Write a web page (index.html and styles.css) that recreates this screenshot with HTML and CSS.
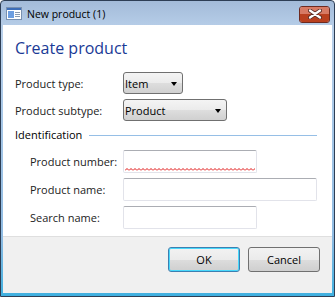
FILE: index.html
```html
<!DOCTYPE html>
<html>
<head>
    <title>New product (1)</title>
    <meta name="viewport" content="width=device-width, initial-scale=1.0">
    <link rel="stylesheet" href="styles.css">
</head>
<body>
    <div class="window">
        <!-- Title bar -->
        <div class="titlebar">
            <svg class="app-icon" width="16" height="13" viewBox="0 0 16 13">
                <rect x="0.5" y="0.5" width="15" height="12" fill="#ffffff" stroke="#7890b0"/>
                <rect x="1" y="1" width="14" height="2" fill="#3d6eb8"/>
                <rect x="2" y="4" width="6" height="7" fill="#6d9ee0"/>
                <rect x="9" y="5" width="5" height="1" fill="#8a9ab0"/>
                <rect x="9" y="7" width="5" height="1" fill="#8a9ab0"/>
                <rect x="9" y="9" width="5" height="1" fill="#8a9ab0"/>
            </svg>
            <span class="title">New product (1)</span>
            <div class="close-btn">
                <div class="close-top"></div>
                <div class="close-bottom"></div>
                <svg class="close-x" width="14" height="10" viewBox="0 0 14 10">
                    <path d="M2 1.5 L12 8.5 M12 1.5 L2 8.5" stroke="#5c2e26" stroke-width="4" stroke-linecap="round"/>
                    <path d="M2 1.5 L12 8.5 M12 1.5 L2 8.5" stroke="#ffffff" stroke-width="2.2" stroke-linecap="round"/>
                </svg>
            </div>
        </div>

        <!-- Client area -->
        <div class="client">
            <div class="content">
                <div class="heading">Create product</div>

                <div class="field-row">
                    <div class="label">Product type:</div>
                    <div class="combo combo-short"><span>Item</span><i class="arrow"></i></div>
                </div>
                <div class="field-row">
                    <div class="label">Product subtype:</div>
                    <div class="combo combo-long"><span>Product</span><i class="arrow"></i></div>
                </div>

                <div class="group-title">
                    <span>Identification</span>
                    <div class="group-line"></div>
                </div>

                <div class="group">
                    <div class="field-row">
                        <div class="label">Product number:</div>
                        <div class="textbox textbox-mid">
                            <svg class="squiggle" width="100%" height="3">
                                <defs>
                                    <pattern id="zigzag" width="4" height="3" patternUnits="userSpaceOnUse">
                                        <path d="M0 2.5 L2 0.5 L4 2.5" stroke="#e01010" stroke-width="1" fill="none"/>
                                    </pattern>
                                </defs>
                                <rect width="100%" height="3" fill="url(#zigzag)"/>
                            </svg>
                        </div>
                    </div>
                    <div class="field-row">
                        <div class="label">Product name:</div>
                        <div class="textbox textbox-wide"></div>
                    </div>
                    <div class="field-row">
                        <div class="label">Search name:</div>
                        <div class="textbox textbox-mid"></div>
                    </div>
                </div>
            </div>

            <div class="footer">
                <button class="btn btn-default">OK</button>
                <button class="btn">Cancel</button>
            </div>
        </div>
    </div>
</body>
</html>
```

FILE: styles.css
```css
body {
    margin: 0;
    background: #ffffff;
    font-family: 'Open Sans', 'Liberation Sans', sans-serif;
}
.window {
    width: 335px;
    height: 297px;
    box-sizing: border-box;
    border: 1px solid #2d3e55;
    border-radius: 4px 4px 0 0;
    background: linear-gradient(#a3bbd9, #b9d0ea 10%, #8fbbe2 80%, #3fb0e0);
    padding: 0 2px 3px 2px;
    display: flex;
    flex-direction: column;
    overflow: hidden;
}
.titlebar {
    height: 24px;
    flex-shrink: 0;
    display: flex;
    align-items: center;
    padding-left: 3px;
    padding-right: 2px;
}
.app-icon {
    margin-top: 1px;
    margin-right: 5px;
}
.title {
    font-size: 10.5px;
    color: #000000;
    flex: 1;
    margin-top: 1px;
}
/* close button: two halves, X sits over them */
.close-btn {
    position: relative;
    flex-shrink: 0;
    width: 31px;
    height: 17px;
    box-sizing: border-box;
    border: 1px solid #6e2a20;
    border-radius: 3px;
    overflow: hidden;
    margin-top: 2px;
    display: flex;
    flex-direction: column;
}
.close-top {
    flex: 1;
    background: #d77a64;
}
.close-bottom {
    flex: 1;
    background: #b9401f;
}
.close-x {
    position: absolute;
    left: 8px;
    top: 2px;
}
.client {
    flex: 1;
    display: flex;
    flex-direction: column;
    background: #ffffff;
}
.content {
    flex: 1;
    padding: 12px 15px 0 12px;
}
.heading {
    font-size: 16px;
    line-height: 22px;
    color: #1a3a96;
    margin-bottom: 13px;
}
.field-row {
    display: flex;
    align-items: center;
    margin-bottom: 5px;
}
.label {
    width: 108px;
    font-size: 11px;
    color: #222222;
}
.combo {
    height: 22px;
    box-sizing: border-box;
    border: 1px solid #707070;
    border-radius: 3px;
    background: linear-gradient(#f4f4f4, #ebebeb 50%, #dedede 50%, #d0d0d0);
    display: flex;
    align-items: center;
    padding: 0 5px 0 1px;
    font-size: 11px;
    color: #000000;
}
.combo span {
    flex: 1;
}
.combo-short {
    width: 60px;
}
.combo-long {
    width: 104px;
}
.arrow {
    width: 0;
    height: 0;
    border-left: 3.5px solid transparent;
    border-right: 3.5px solid transparent;
    border-top: 4px solid #000000;
    margin-top: 1px;
}
.group-title {
    display: flex;
    align-items: center;
    margin-top: 6px;
    margin-bottom: 7px;
    line-height: 16px;
    font-size: 11px;
    color: #000000;
}
.group-line {
    flex: 1;
    height: 1px;
    background: #96bfe6;
    margin-left: 7px;
}
.group {
    padding-left: 15px;
}
.group .label {
    width: 93px;
}
.textbox {
    height: 23px;
    box-sizing: border-box;
    border: 1px solid #e2e3ea;
    border-top-color: #abadb3;
    border-radius: 2px;
    background: #ffffff;
    display: flex;
    align-items: flex-end;
    padding: 0 1px 1px 1px;
}
.textbox-mid {
    width: 134px;
}
.textbox-wide {
    width: 194px;
}
.squiggle {
    display: block;
}
.footer {
    height: 46px;
    flex-shrink: 0;
    background: #f0f0f0;
    border-top: 1px solid #dfdfdf;
    display: flex;
    justify-content: flex-end;
    align-items: flex-start;
    padding: 10px 12px 0 0;
    gap: 8px;
}
.btn {
    width: 72px;
    height: 25px;
    box-sizing: border-box;
    border: 1px solid #707070;
    border-radius: 3px;
    background: linear-gradient(#f2f2f2, #ebebeb 50%, #dddddd 50%, #cfcfcf);
    font-family: 'Open Sans', 'Liberation Sans', sans-serif;
    font-size: 11px;
    color: #000000;
    padding: 0;
}
.btn-default {
    border-color: #3c7fb1;
    box-shadow: inset 0 0 0 1px #48d8fb;
}
```
